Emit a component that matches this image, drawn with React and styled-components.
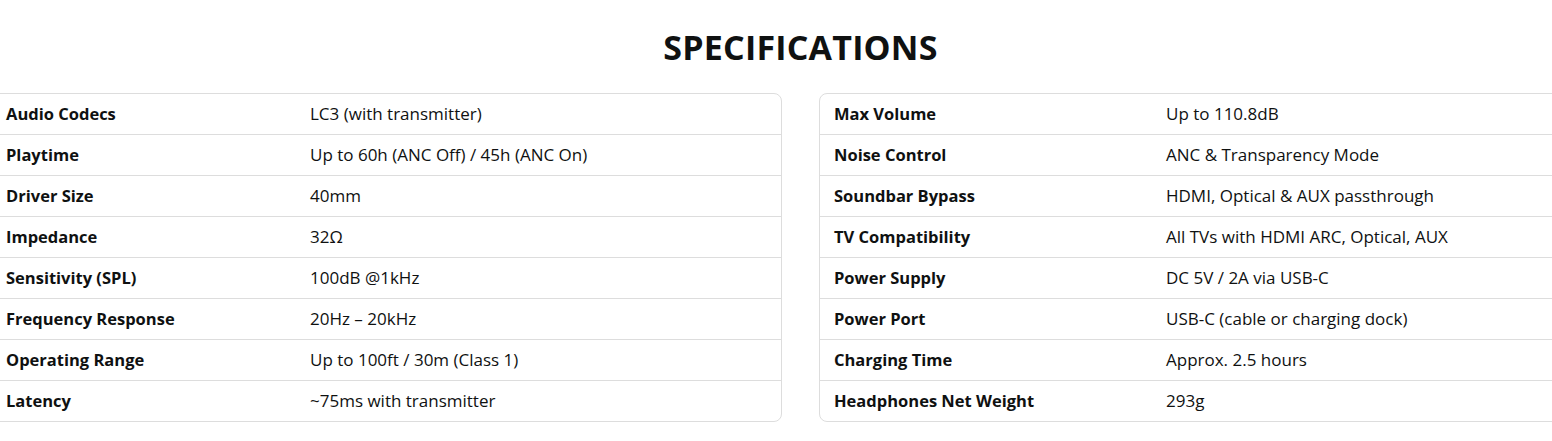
import React from "react";
import styled, { createGlobalStyle } from "styled-components";

const GlobalStyle = createGlobalStyle`
  html, body {
    margin: 0;
    padding: 0;
    background: #ffffff;
    overflow: hidden;
  }
  body {
    font-family: "Open Sans", "Liberation Sans", sans-serif;
    color: #0f1111;
  }
`;

const Section = styled.section`
  width: 1619px;
  margin-left: -9px;
  padding-top: 30px;
`;

const Title = styled.h2`
  margin: 0 0 28px;
  text-align: center;
  font-size: 34px;
  line-height: 35px;
  font-weight: 700;
  letter-spacing: 0.2px;
  color: #0f1111;
`;

const Columns = styled.div`
  display: grid;
  grid-template-columns: 791px 791px;
  column-gap: 37px;
`;

const Card = styled.div`
  display: grid;
  grid-template-columns: ${(p) => p.$labelWidth}px 1fr;
  border: 1px solid #dddddd;
  border-radius: 8px;
  overflow: hidden;
`;

const Cell = styled.div`
  height: 40px;
  display: flex;
  align-items: center;
  padding: 0 14px 2px;
  box-sizing: border-box;
  font-size: ${(p) => (p.$label ? "16.5px" : "17px")};
  font-weight: ${(p) => (p.$label ? 700 : 400)};
  border-top: ${(p) => (p.$first ? "none" : "1px solid #dddddd")};
  height: ${(p) => (p.$first ? "40px" : "41px")};
  white-space: nowrap;
`;

const left = [
  ["Audio Codecs", "LC3 (with transmitter)"],
  ["Playtime", "Up to 60h (ANC Off) / 45h (ANC On)"],
  ["Driver Size", "40mm"],
  ["Impedance", "32Ω"],
  ["Sensitivity (SPL)", "100dB @1kHz"],
  ["Frequency Response", "20Hz – 20kHz"],
  ["Operating Range", "Up to 100ft / 30m (Class 1)"],
  ["Latency", "~75ms with transmitter"],
];

const right = [
  ["Max Volume", "Up to 110.8dB"],
  ["Noise Control", "ANC & Transparency Mode"],
  ["Soundbar Bypass", "HDMI, Optical & AUX passthrough"],
  ["TV Compatibility", "All TVs with HDMI ARC, Optical, AUX"],
  ["Power Supply", "DC 5V / 2A via USB-C"],
  ["Power Port", "USB-C (cable or charging dock)"],
  ["Charging Time", "Approx. 2.5 hours"],
  ["Headphones Net Weight", "293g"],
];

function SpecTable({ rows, labelWidth }) {
  return (
    <Card $labelWidth={labelWidth}>
      {rows.map(([k, v], i) => (
        <React.Fragment key={k}>
          <Cell $label $first={i === 0}>{k}</Cell>
          <Cell $first={i === 0}>{v}</Cell>
        </React.Fragment>
      ))}
    </Card>
  );
}

export default function App() {
  return (
    <>
      <GlobalStyle />
      <Section>
        <Title>SPECIFICATIONS</Title>
        <Columns>
          <SpecTable rows={left} labelWidth={304} />
          <SpecTable rows={right} labelWidth={332} />
        </Columns>
      </Section>
    </>
  );
}
